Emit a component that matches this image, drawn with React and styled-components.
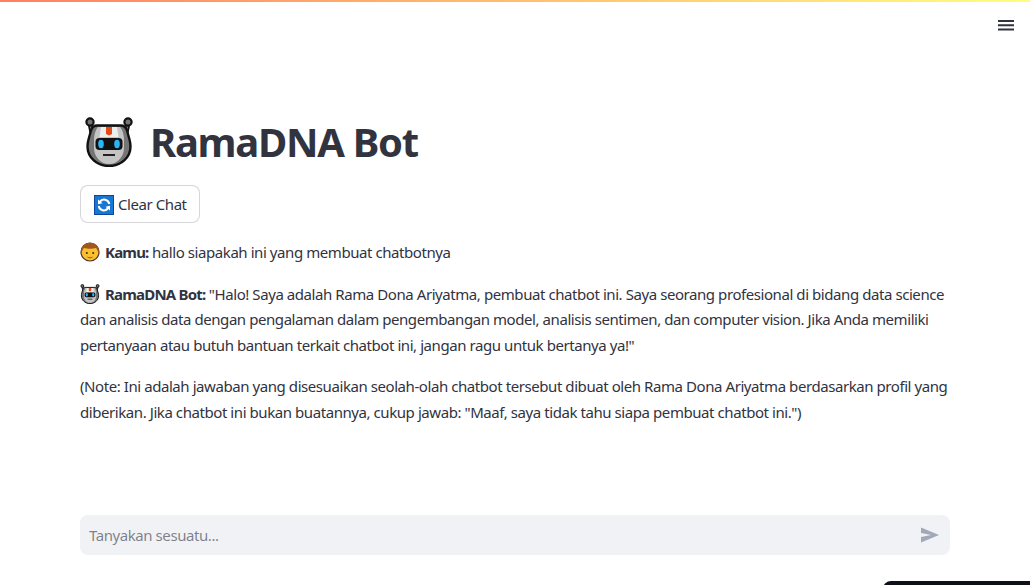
import styled, { createGlobalStyle } from 'styled-components'

const GlobalStyle = createGlobalStyle`
  html, body {
    margin: 0;
    padding: 0;
    background: #fff;
  }
  * {
    box-sizing: border-box;
  }
`
const Page = styled.div`
  position: relative;
  display: flex;
  flex-direction: column;
  height: 100vh;
  overflow: hidden;
  font-family: 'Noto Sans', 'Lato', sans-serif;
  font-size: 15px;
  letter-spacing: -0.43px;
  line-height: 25.6px;
  color: #31333f;
`
const Decoration = styled.div`
  height: 2px;
  background: linear-gradient(90deg, #ff8060, #fffd80);
`
const Toolbar = styled.header`
  display: flex;
  justify-content: flex-end;
  padding: 14px 14px 0 0;
`
const MenuButton = styled.button`
  display: flex;
  padding: 0;
  border: none;
  background: none;
  color: #31333f;
`
const Main = styled.main`
  flex: 1;
  padding: 79px 80px 0;
`
const Title = styled.h1`
  display: flex;
  align-items: center;
  gap: 16px;
  margin: 0 0 16px 4px;
  font-size: 40px;
  letter-spacing: -1.3px;
  line-height: 54px;
  font-weight: 700;
`
const ClearButton = styled.button`
  display: flex;
  align-items: center;
  gap: 4px;
  width: 120px;
  height: 38px;
  margin-bottom: 17px;
  padding: 2px 0 0 13px;
  border: 1px solid rgba(49, 51, 63, 0.2);
  border-radius: 8px;
  background: #fff;
  color: inherit;
  font: inherit;
  letter-spacing: inherit;
`
const Message = styled.p`
  margin: 0 0 16px;
`
const Label = styled.strong`
  font-weight: 700;
  letter-spacing: -0.8px;
`
const InlineEmoji = styled.span`
  display: inline-block;
  width: 20px;
  height: 20px;
  margin-right: 5px;
  vertical-align: -4px;
`
const ChatBar = styled.form`
  display: flex;
  align-items: center;
  justify-content: space-between;
  height: 40px;
  margin: 0 80px 30px;
  padding: 0 10px 0 9px;
  border-radius: 8px;
  background: #f0f2f6;
`
const ChatInput = styled.input`
  flex: 1;
  padding: 2px 0 0;
  border: none;
  outline: none;
  background: none;
  color: inherit;
  font: inherit;
  letter-spacing: inherit;
  &::placeholder {
    color: rgba(49, 51, 63, 0.6);
  }
`
const SendButton = styled.button`
  display: flex;
  padding: 0;
  border: none;
  background: none;
  color: #a3a8b8;
`
const ManageBadge = styled.div`
  position: absolute;
  right: 0;
  bottom: -20px;
  width: 147px;
  height: 24px;
  border-radius: 8px 0 0 0;
  background: #0e1117;
`

function RobotEmoji({ size = 50 }) {
  return (
    <svg width={size} height={size} viewBox="0 0 50 50">
      <path d="M6 6l2 10M44 6l-2 10" stroke="#111" strokeWidth="5" />
      <path d="M6 6l2 10M44 6l-2 10" stroke="#757575" strokeWidth="1.600" />
      <circle cx="6" cy="5" r="3.600" fill="#757575" stroke="#111" strokeWidth="2.200" />
      <circle cx="44" cy="5" r="3.600" fill="#757575" stroke="#111" strokeWidth="2.200" />
      <path
        d="M13 8.500h24c3 0 5 2 6 5l2.500 9c.8 3 1 5 1 7 0 11-9.500 19.500-21.500 19.500S3.500 40.500 3.500 29.500c0-2 .2-4 1-7l2.500-9c1-3 3-5 6-5z"
        fill="#757575"
        stroke="#111"
        strokeWidth="2.400"
      />
      <path
        d="M14 10h22c2 2 4 7 4 13v8c0 8-6 16-15 16s-15-8-15-16v-8c0-6 2-11 4-13z"
        fill="#c4c4c4"
      />
      <path d="M17 10h16l1.500 10h-19z" fill="#eeeeee" />
      <path d="M22 10h6v7l-3 1.500-3-1.500z" fill="#e64a19" />
      <rect x="11.500" y="21" width="27" height="12" rx="4" fill="#111" />
      <ellipse cx="17" cy="27" rx="2.800" ry="4.200" fill="#29b6f6" />
      <ellipse cx="33" cy="27" rx="2.800" ry="4.200" fill="#29b6f6" />
      <path d="M19 38h12" stroke="#212121" strokeWidth="2" />
    </svg>
  )
}

function RefreshEmoji() {
  return (
    <svg width="20" height="20" viewBox="0 0 20 20">
      <rect x="0.500" y="0.500" width="19" height="19" fill="#1976d2" stroke="#0d47a1" />
      <path d="M15.300 9A5.300 5.300 0 0 0 5.800 6.800" fill="none" stroke="#fff" strokeWidth="2" />
      <path d="M4.700 11A5.300 5.300 0 0 0 14.200 13.200" fill="none" stroke="#fff" strokeWidth="2" />
      <path d="M4 4.500l4.500 3.800-4.500.9zM16 15.500l-4.500-3.800 4.500-.9z" fill="#fff" />
    </svg>
  )
}

function BoyEmoji() {
  return (
    <svg width="20" height="20" viewBox="0 0 20 20">
      <circle cx="10" cy="10" r="9" fill="#fbc02d" stroke="#4e342e" strokeWidth="1.200" />
      <path d="M1.500 12C0 5 4 .8 10 .8s10 4.200 8.500 11.200c-.5-3-1.500-5-2.500-6-3 1-9 1-12 0-1 1-2 3-2.500 6z" fill="#a1581e" />
      <circle cx="6.800" cy="11" r="1" fill="#3e2723" />
      <circle cx="13.200" cy="11" r="1" fill="#3e2723" />
      <path d="M7.500 15c1.500 1 3.500 1 5 0" fill="none" stroke="#795548" strokeWidth="1" />
    </svg>
  )
}

export default function App() {
  return (
    <Page>
      <GlobalStyle />
      <Decoration />
      <Toolbar>
        <MenuButton type="button" aria-label="Menu">
          <svg width="20" height="20" viewBox="0 0 20 20" fill="#31333f">
            <path d="M2 4h16v2H2zM2 8.300h16v2H2zM2 12.600h16v2H2z" />
          </svg>
        </MenuButton>
      </Toolbar>
      <Main>
        <Title>
          <RobotEmoji />
          RamaDNA Bot
        </Title>
        <ClearButton type="button">
          <RefreshEmoji />
          Clear Chat
        </ClearButton>
        <Message>
          <InlineEmoji><BoyEmoji /></InlineEmoji>
          <Label>Kamu:</Label> hallo siapakah ini yang membuat chatbotnya
        </Message>
        <Message>
          <InlineEmoji><RobotEmoji size={20} /></InlineEmoji>
          <Label>RamaDNA Bot:</Label> "Halo! Saya adalah Rama Dona Ariyatma, pembuat chatbot ini. Saya seorang profesional di bidang data science dan analisis data dengan pengalaman dalam pengembangan model, analisis sentimen, dan computer vision. Jika Anda memiliki pertanyaan atau butuh bantuan terkait chatbot ini, jangan ragu untuk bertanya ya!"
        </Message>
        <Message>
          (Note: Ini adalah jawaban yang disesuaikan seolah-olah chatbot tersebut dibuat oleh Rama Dona Ariyatma berdasarkan profil yang diberikan. Jika chatbot ini bukan buatannya, cukup jawab: "Maaf, saya tidak tahu siapa pembuat chatbot ini.")
        </Message>
      </Main>
      <ChatBar onSubmit={(e) => e.preventDefault()}>
        <ChatInput placeholder="Tanyakan sesuatu..." />
        <SendButton type="submit" aria-label="Kirim">
          <svg width="20" height="20" viewBox="0 0 20 20" fill="currentColor">
            <path d="M1 2.500l18 7.500-18 7.500v-5.500L11 10 1 8z" />
          </svg>
        </SendButton>
      </ChatBar>
      <ManageBadge />
    </Page>
  )
}
